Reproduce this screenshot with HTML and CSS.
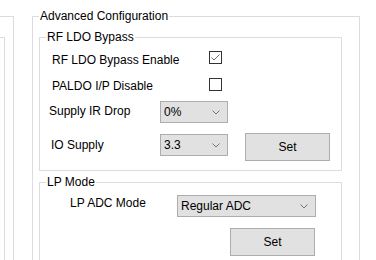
FILE: index.html
```html
<!DOCTYPE html>
<html>
<head>
<meta charset="utf-8">
<link rel="stylesheet" href="styles.css">
</head>
<body>
<div class="stage">
  <div class="left-outer">
    <div class="left-inner"></div>
  </div>
  <div class="group adv">
    <span class="legend">Advanced Configuration</span>
    <div class="group rf">
      <span class="legend">RF LDO Bypass</span>
      <div class="row r1">
        <span class="label l1">RF LDO Bypass Enable</span>
        <span class="check">
          <svg width="13" height="13" viewBox="0 0 13 13"><rect x="0.5" y="0.5" width="12" height="12" fill="#fff" stroke="#333"/><polyline points="2.5,6.5 5,9 10.5,3.5" fill="none" stroke="#6e6e6e" stroke-width="1"/></svg>
        </span>
      </div>
      <div class="row r2">
        <span class="label l1">PALDO I/P Disable</span>
        <span class="check">
          <svg width="13" height="13" viewBox="0 0 13 13"><rect x="0.5" y="0.5" width="12" height="12" fill="#fff" stroke="#333"/></svg>
        </span>
      </div>
      <div class="row r3">
        <span class="label l3">Supply IR Drop</span>
        <span class="combo small"><span class="val">0%</span><svg class="chev" width="8" height="5" viewBox="0 0 8 5"><polyline points="0.5,0.5 4,4 7.5,0.5" fill="none" stroke="#777"/></svg></span>
      </div>
      <div class="row r4">
        <span class="label l4">IO Supply</span>
        <span class="combo small c4"><span class="val">3.3</span><svg class="chev" width="8" height="5" viewBox="0 0 8 5"><polyline points="0.5,0.5 4,4 7.5,0.5" fill="none" stroke="#777"/></svg></span>
        <span class="btn set1">Set</span>
      </div>
    </div>
    <div class="group lp">
      <span class="legend">LP Mode</span>
      <div class="row r5">
        <span class="label l5">LP ADC Mode</span>
        <span class="combo wide"><span class="val">Regular ADC</span><svg class="chev" width="8" height="5" viewBox="0 0 8 5"><polyline points="0.5,0.5 4,4 7.5,0.5" fill="none" stroke="#777"/></svg></span>
      </div>
      <div class="row r6">
        <span class="btn set2">Set</span>
      </div>
    </div>
  </div>
</div>
</body>
</html>
```
FILE: styles.css
```css
html, body {
  margin: 0;
  padding: 0;
  background: #fff;
}
body {
  font-family: "Liberation Sans", Arial, sans-serif;
  font-size: 12px;
  color: #000;
  width: 376px;
  height: 260px;
  overflow: hidden;
}
.stage {
  display: flex;
  align-items: flex-start;
  height: 260px;
  overflow: hidden;
}
.left-outer {
  flex: none;
  width: 13px;
  height: 300px;
  margin-top: 16px;
  border-top: 1px solid #dcdcdc;
  border-right: 1px solid #dcdcdc;
}
.left-inner {
  width: 4px;
  height: 300px;
  margin-top: 20px;
  border-top: 1px solid #dcdcdc;
  border-right: 1px solid #dcdcdc;
}
.group {
  position: relative;
  border: 1px solid #dcdcdc;
}
.legend {
  position: absolute;
  top: -8px;
  left: 6px;
  padding: 0 1px;
  line-height: 15px;
  background: #fff;
  white-space: nowrap;
}
.adv {
  flex: none;
  width: 326px;
  height: 300px;
  margin-left: 18px;
  margin-top: 16px;
  border-bottom: none;
}
.rf {
  margin: 20px 17px 0 6px;
  padding-bottom: 9px;
}
.lp {
  margin: 11px 17px 0 6px;
  height: 120px;
}
.row {
  display: flex;
  align-items: flex-start;
}
.label {
  flex: none;
  line-height: 14px;
  white-space: nowrap;
}
.r1 { margin-top: 13px; }
.r1 .label { margin-top: 2px; }
.l1 { margin-left: 12px; width: 157px; }
.r2 { margin-top: 11px; }
.r2 .label { margin-top: 1px; }
.r3 { margin-top: 8px; }
.r3 .label { margin-top: 3px; }
.l3 { margin-left: 9px; width: 111px; }
.r4 { margin-top: 10px; }
.r4 .label { margin-top: 5px; }
.l4 { margin-left: 11px; width: 109px; }
.c4 { margin-top: 1px; }
.r5 { margin-top: 12px; }
.r5 .label { margin-top: 1px; }
.l5 { margin-left: 30px; width: 107px; }
.r6 { margin-top: 11px; }
.check {
  flex: none;
  display: block;
  width: 13px;
  height: 13px;
}
.check svg { display: block; }
.combo {
  flex: none;
  box-sizing: border-box;
  height: 22px;
  display: flex;
  align-items: center;
  justify-content: space-between;
  padding: 0 7px 0 3px;
  background: #e1e1e1;
  border: 1px solid #adadad;
}
.combo .val { line-height: 14px; }
.chev { display: block; }
.small { width: 68px; }
.wide { width: 139px; }
.btn {
  flex: none;
  box-sizing: border-box;
  width: 85px;
  height: 28px;
  display: flex;
  align-items: center;
  justify-content: center;
  background: #e1e1e1;
  border: 1px solid #adadad;
}
.set1 { margin-left: 17px; }
.set2 { margin-left: 190px; }
```
